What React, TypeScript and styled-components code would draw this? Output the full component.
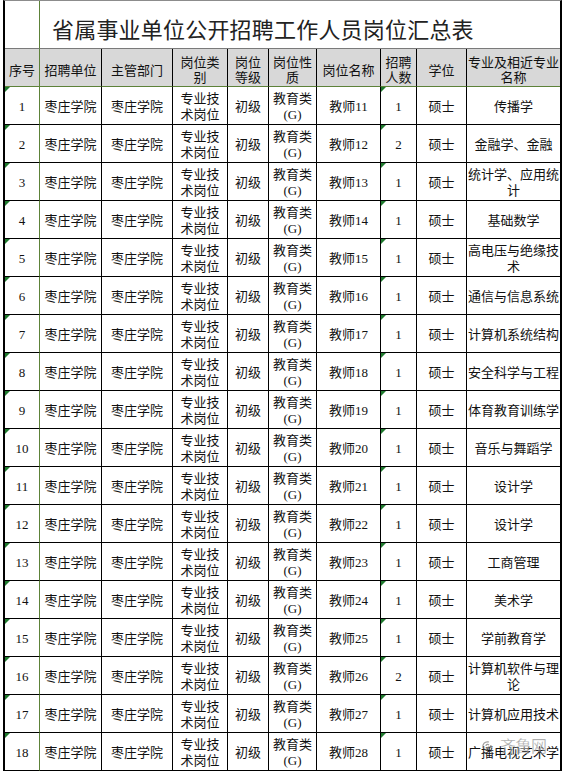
import React from 'react'
import styled, { createGlobalStyle, css } from 'styled-components'

type Row = {
  no: string;
  post: string;
  count: string;
  major: string;
}

const GlobalStyle = createGlobalStyle`
  html, body {
    margin: 0;
    padding: 0;
    background: #fff;
  }
`

const FREEZE = '#5d8239'

const Sheet = styled.div`
  display: grid;
  grid-template-columns: 35px 62px 71px 55px 41px 48px 64px 36px 50px 93px;
  width: 559px;
  margin-left: 3px;
  box-sizing: border-box;
  border-left: 2px solid #000;
  border-right: 2px solid #000;
  border-top: 1px solid #8c8c8c;
  font-family: "Liberation Serif", "Noto Sans CJK SC", serif;
  color: #111;
`
const TitleGap = styled.div`
  height: 48px;
  box-sizing: border-box;
  border-right: 1px solid ${FREEZE};
  border-bottom: 1px solid #7a7a7a;
`
const Title = styled.div`
  grid-column: 2 / -1;
  height: 48px;
  box-sizing: border-box;
  border-bottom: 1px solid #7a7a7a;
  display: flex;
  align-items: center;
  padding: 6px 0 0 12px;
  font-family: "Noto Sans CJK SC", sans-serif;
  font-size: 22px;
  letter-spacing: 0.2px;
  color: #222;
`
const Cell = styled.div<{ $head?: boolean; $freeze?: boolean; $last?: boolean; $tick?: boolean }>`
  position: relative;
  height: 38px;
  box-sizing: border-box;
  display: flex;
  align-items: center;
  justify-content: center;
  text-align: center;
  white-space: pre;
  padding-top: 3px;
  font-size: 13px;
  line-height: 16px;
  border-right: 1px solid ${p => (p.$freeze ? FREEZE : '#000')};
  border-bottom: 1px solid #000;
  ${p => p.$last && css`border-right: none;`}
  ${p => p.$head && css`
    background: #d8d8d8;
    line-height: 15px;
    border-bottom-color: ${FREEZE};
    font-family: "Noto Sans CJK SC", sans-serif;
  `}
  ${p => p.$tick && css`
    &::before {
      content: '';
      position: absolute;
      top: 0;
      left: 0;
      border-top: 5px solid #1f7a2e;
      border-right: 5px solid transparent;
    }
  `}
`
const Watermark = styled.div`
  position: absolute;
  left: 14px;
  top: 4px;
  display: flex;
  align-items: center;
  gap: 7px;
  pointer-events: none;
`
const MarkText = styled.span`
  font-family: "Noto Sans CJK SC", sans-serif;
  font-size: 16px;
  letter-spacing: -0.5px;
  color: rgba(90, 90, 90, 0.6);
  -webkit-text-stroke: 0.5px rgba(255, 255, 255, 0.6);
`

const headers = [
  '序号', '招聘单位', '主管部门', '岗位类\n别', '岗位\n等级',
  '岗位性\n质', '岗位名称', '招聘\n人数', '学位', '专业及相近专业\n名称',
]

const rows: Row[] = [
  { no: '1', post: '11', count: '1', major: '传播学' },
  { no: '2', post: '12', count: '2', major: '金融学、金融' },
  { no: '3', post: '13', count: '1', major: '统计学、应用统\n计' },
  { no: '4', post: '14', count: '1', major: '基础数学' },
  { no: '5', post: '15', count: '1', major: '高电压与绝缘技\n术' },
  { no: '6', post: '16', count: '1', major: '通信与信息系统' },
  { no: '7', post: '17', count: '1', major: '计算机系统结构' },
  { no: '8', post: '18', count: '1', major: '安全科学与工程' },
  { no: '9', post: '19', count: '1', major: '体育教育训练学' },
  { no: '10', post: '20', count: '1', major: '音乐与舞蹈学' },
  { no: '11', post: '21', count: '1', major: '设计学' },
  { no: '12', post: '22', count: '1', major: '设计学' },
  { no: '13', post: '23', count: '1', major: '工商管理' },
  { no: '14', post: '24', count: '1', major: '美术学' },
  { no: '15', post: '25', count: '1', major: '学前教育学' },
  { no: '16', post: '26', count: '2', major: '计算机软件与理\n论' },
  { no: '17', post: '27', count: '1', major: '计算机应用技术' },
  { no: '18', post: '28', count: '1', major: '广播电视艺术学' },
]

function Logo() {
  return (
    <svg width="12" height="11" viewBox="0 0 12 11">
      <path d="M2 8 C1 4 4 1 8 2 M3 9 C6 10 10 8 10 5 M5 6 C5 4 7 4 8 5"
        fill="none" stroke="rgba(90,90,90,0.6)" strokeWidth="1.2" />
    </svg>
  )
}

export default function App() {
  return (
    <>
      <GlobalStyle />
      <Sheet>
        <TitleGap />
        <Title>省属事业单位公开招聘工作人员岗位汇总表</Title>

        {headers.map((h, i) => (
          <Cell key={h} $head $freeze={i === 0} $last={i === headers.length - 1}>{h}</Cell>
        ))}

        {rows.map((r, idx) => (
          <React.Fragment key={r.no}>
            <Cell $freeze $tick>{r.no}</Cell>
            <Cell>枣庄学院</Cell>
            <Cell>枣庄学院</Cell>
            <Cell>{'专业技\n术岗位'}</Cell>
            <Cell>初级</Cell>
            <Cell>{'教育类\n(G)'}</Cell>
            <Cell>教师{r.post}</Cell>
            <Cell $tick>{r.count}</Cell>
            <Cell>硕士</Cell>
            <Cell $last>
              {r.major}
              {idx === rows.length - 1 && (
                <Watermark>
                  <Logo />
                  <MarkText>齐鲁网</MarkText>
                </Watermark>
              )}
            </Cell>
          </React.Fragment>
        ))}
      </Sheet>
    </>
  )
}
